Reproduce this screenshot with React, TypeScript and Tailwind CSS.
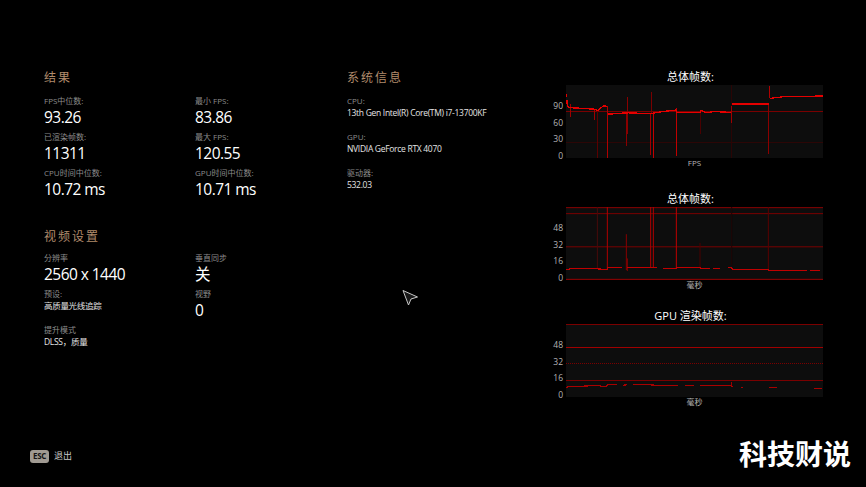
const font = { fontFamily: '"Open Sans", "Noto Sans CJK SC", sans-serif' };

function Heading({ children }: { children: string }) {
  return <h2 className="text-[12px] leading-[16px] tracking-[2px] text-[#b08b6c]">{children}</h2>;
}

function Stat({ label, value, small }: { label: string; value: string; small?: boolean }) {
  return (
    <div className="h-[36px]">
      <div className="h-[12px] text-[8px] leading-[12px] text-[#8c8c8c] whitespace-nowrap">{label}</div>
      <div className={small ? "text-[8.5px] leading-[12px] tracking-[-0.3px] text-[#e4e4e4] whitespace-nowrap" : "text-[15.5px] leading-[20px] tracking-[-0.55px] text-white whitespace-nowrap"}>
        {value}
      </div>
    </div>
  );
}

type Spike = [number, number, number, string?];

function Chart({ title, unit, labels, viewBox, rules, spikes, line, lineColor }: {
  title: string;
  unit: string;
  labels: string[];
  viewBox: string;
  rules: [number, string, string?][];
  spikes: Spike[];
  line: string[];
  lineColor: string;
}) {
  const [vx, , vw] = viewBox.split(" ").map(Number);
  return (
    <div>
      <div className="h-[16px] text-center text-[11px] leading-[16px] text-white pl-[10px]">{title}</div>
      <div className="flex h-[73px]">
        <div className="w-[15px] mr-[3px] pt-[13px] flex flex-col items-end text-[8.5px] text-[#b5b5b5]">
          {labels.map((l) => (
            <div key={l} className="h-[16.5px] leading-[16.5px] shrink-0">{l}</div>
          ))}
        </div>
        <svg width="257" height="73" viewBox={viewBox} preserveAspectRatio="none" shapeRendering="crispEdges" className="bg-[#0d0d0d] block">
          {rules.map(([y, color, dash], i) => (
            <line key={i} x1={vx} x2={vx + vw} y1={y} y2={y} stroke={color} strokeWidth="3" strokeDasharray={dash} />
          ))}
          {spikes.map(([x, y1, y2, color], i) => (
            <line key={i} x1={x} x2={x} y1={y1} y2={y2} stroke={color ?? "#a00000"} strokeWidth="3" />
          ))}
          {line.map((points, i) => (
            <polyline key={i} points={points} fill="none" stroke={lineColor} strokeWidth="4" />
          ))}
        </svg>
      </div>
      <div className="h-[10px] text-center text-[8px] leading-[10px] text-[#b5b5b5] pl-[18px]">{unit}</div>
    </div>
  );
}

export default function App() {
  return (
    <div className="relative w-[866px] h-[487px] overflow-hidden bg-black flex" style={font}>
      {/* left column */}
      <div className="w-[303px] ml-[44px] pt-[70px]">
        <Heading>结果</Heading>
        <div className="grid grid-cols-[151px_1fr] mt-[9px]">
          <Stat label="FPS中位数:" value="93.26" />
          <Stat label="最小 FPS:" value="83.86" />
          <Stat label="已渲染帧数:" value="11311" />
          <Stat label="最大 FPS:" value="120.55" />
          <Stat label="CPU时间中位数:" value="10.72 ms" />
          <Stat label="GPU时间中位数:" value="10.71 ms" />
        </div>
        <div className="mt-[26px]">
          <Heading>视频设置</Heading>
        </div>
        <div className="grid grid-cols-[151px_1fr] mt-[7px]">
          <Stat label="分辨率" value="2560 x 1440" />
          <Stat label="垂直同步" value="关" />
          <Stat label="预设:" value="高质量光线追踪" small />
          <Stat label="视野" value="0" />
          <Stat label="提升模式" value="DLSS，质量" small />
        </div>
      </div>

      {/* system info */}
      <div className="w-[201px] pt-[70px]">
        <Heading>系统信息</Heading>
        <div className="mt-[9px]">
          <Stat label="CPU:" value="13th Gen Intel(R) Core(TM) i7-13700KF" small />
          <Stat label="GPU:" value="NVIDIA GeForce RTX 4070" small />
          <Stat label="驱动器:" value="532.03" small />
        </div>
      </div>

      {/* charts */}
      <div className="w-[275px] pt-[69px] flex flex-col gap-[23px]">
        <Chart
          title="总体帧数:"
          unit="FPS"
          labels={["90", "60", "30", "0"]}
          viewBox="78 60 771 218"
          lineColor="#e60000"
          rules={[[139, "#7a0000"], [232, "#2c0606"]]}
          spikes={[
            [172, 135, 278, "#5a0000"], [202, 124, 278, "#b00000"], [163, 132, 165], [91, 118, 156],
            [262, 96, 205, "#8a0000"], [259, 145, 243, "#8a0000"], [331, 146, 268, "#a00000"], [334, 82, 146, "#7a0000"],
            [340, 146, 278, "#c00000"], [409, 128, 272, "#c00000"], [481, 135, 207, "#4a0000"],
            [575, 60, 278, "#2a0505"], [575, 123, 172, "#a00000"], [686, 115, 266, "#8a0000"], [688, 62, 100, "#b00000"],
          ]}
          line={[
            "79,86 79,96", "81,105 82,125 95,128 130,130 160,132 175,136 190,122 202,124",
            "204,147 235,145 265,143 330,146 350,142 380,138 408,135 411,143 480,143 483,136 500,143 520,139 574,142",
            "576,115 686,115", "576,116.5 686,116.5", "690,100 730,95 790,94 849,93",
          ]}
        />
        <Chart
          title="总体帧数:"
          unit="毫秒"
          labels={["48", "32", "16", "0"]}
          viewBox="78 50 771 220"
          lineColor="#c00000"
          rules={[[52, "#8a0000"], [70, "#7a0000"], [170, "#7a0000"], [268, "#9a0000"]]}
          spikes={[
            [172, 50, 236, "#4a0a0a"], [202, 50, 238, "#b00000"], [332, 50, 232, "#b00000"], [340, 50, 232, "#b00000"],
            [409, 50, 235, "#c00000"], [259, 132, 240, "#8a0000"], [262, 205, 243, "#8a0000"], [480, 158, 235, "#4a0000"],
            [575, 50, 225, "#1e0505"], [685, 50, 238, "#5a0000"],
          ]}
          line={[
            "80,240 90,236 170,236 187,238 202,238 204,232 245,232", "262,232 350,232", "370,235 410,235 412,232 480,232 483,235 510,235",
            "520,236 540,236", "564,232 575,232 577,238 685,238 688,242 800,242", "810,242 840,242",
          ]}
        />
        <div className="-mt-[5px]">
          <Chart
            title="GPU 渲染帧数:"
            unit="毫秒"
            labels={["48", "32", "16", "0"]}
            viewBox="78 57 771 218"
            lineColor="#a80000"
            rules={[[58, "#7a0000"], [127, "#a00000"], [176, "#7a0000", "3 3"], [226, "#7a0000"]]}
            spikes={[[575, 230, 245, "#a00000"]]}
            line={[
              "80,248 82,244 130,243 150,241 180,241 185,244 200,244 202,238 230,238", "250,240 262,238", "278,238 330,238 350,241 415,241",
              "436,241 462,241", "480,241 573,241 577,246", "604,247 608,247", "687,247 710,247", "822,250 846,250",
            ]}
          />
        </div>
      </div>

      {/* exit hint */}
      <div className="absolute left-[30px] top-[449px] flex items-center gap-[5px]">
        <div className="w-[19px] h-[13px] rounded-[3px] bg-[#a09a92] flex items-center justify-center">
          <span className="text-[8px] leading-none font-bold text-[#141414] tracking-[-0.4px]">ESC</span>
        </div>
        <span className="text-[9px] leading-[14px] text-[#c8c8c8]">退出</span>
      </div>

      {/* cursor */}
      <svg className="absolute left-[400px] top-[288px]" width="20" height="20" viewBox="0 0 20 20">
        <path d="M3 2.5 L17.5 9 L11 11 L8.5 17 Z" fill="#1a1a1a" stroke="#c8c8c8" strokeWidth="1" strokeLinejoin="round" />
      </svg>

      {/* watermark */}
      <div className="absolute left-[739px] top-[435px] text-[28px] leading-[36px] font-bold text-white whitespace-nowrap" style={{ fontFamily: '"Noto Sans CJK SC", sans-serif' }}>
        科技财说
      </div>
    </div>
  );
}
